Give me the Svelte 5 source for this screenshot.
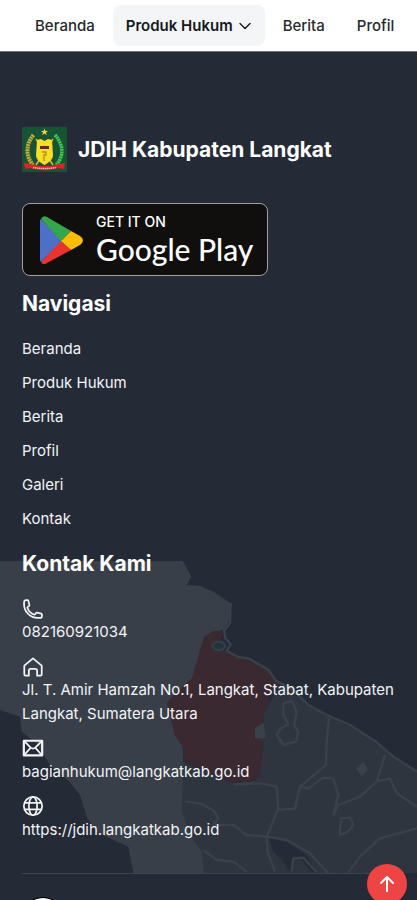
<script>
  const links = ['Beranda', 'Produk Hukum', 'Berita', 'Profil', 'Galeri', 'Kontak'];
</script>

<div class="page">
  <header>
    <nav class="top" aria-label="Menu utama">
      <a href="#beranda">Beranda</a>
      <button type="button" class="active">
        Produk Hukum
        <svg width="12" height="12" viewBox="0 0 12 12" fill="none" stroke="currentColor" stroke-width="1.4" stroke-linecap="round" stroke-linejoin="round" aria-hidden="true"><path d="M1 3.5 6 8.5 11 3.5" /></svg>
      </button>
      <a href="#berita">Berita</a>
      <a href="#profil">Profil</a>
    </nav>
  </header>

  <footer>
    <div class="main">
      <svg class="map" viewBox="0 78 1251 937" aria-hidden="true">
        <path fill="#393f49" d="M0 78H548L574 124 560 150 600 152 640 170 692 205 690 250 675 282 640 292 620 330 600 370 578 430 560 470 505 525 525 590 548 630 550 680 600 720 560 780 560 840 610 915 620 1015H400L385 935 330 910 290 890 262 850 240 780 210 742 150 690 110 625 65 590 60 545 0 525Z" />
        <path fill="#2e353f" d="M550 680 700 745 770 735 790 640 760 590 800 520 845 440 880 465 930 510 985 545 1050 575 1120 618 1180 670 1251 710V1015H612L605 950 570 900 545 830Z" />
        <path fill="#3a2931" d="M612 305 640 288 670 290 664 312 636 325 642 346 680 348 715 368 745 372 780 395 804 408 820 435 845 442 802 480 808 510 790 535 790 570 766 578 765 606 790 620 785 680 780 725 745 742 715 738 700 746 670 728 600 700 550 678 552 640 524 600 512 550 500 505 540 460 575 430 590 380Z" />
        <path fill="#242b36" d="M805 905 860 920 920 960 950 1012H935L900 970 875 975 870 1010 845 975 820 950Z" />
        <g fill="none" stroke="#39414b" stroke-width="7" stroke-linejoin="round">
          <path d="M692 205 690 265 672 287 676 310 692 328 680 348 715 366 745 370 780 390 806 405 828 438 880 464 925 510 985 542 1050 570 1130 622 1180 665 1251 710" />
          <path d="M850 505 875 498 890 530 882 570 895 590 888 620 850 630 830 600 842 580 865 568 850 540Z" />
          <path d="M987 548 980 620 978 690 930 730 900 755 885 820 835 825 830 755 785 745 700 748" />
          <path d="M835 820 815 870 800 905 802 950 825 1010" />
          <path d="M555 800 600 805 640 825 655 850 640 870 700 870 740 900 800 905 860 915 930 955 985 1015" />
          <path d="M1155 660 1130 740 1080 785 1015 810 1000 840 1015 780 1000 730 970 728 925 760 900 755" />
          <path d="M1130 740 1170 730 1190 775 1251 815M1251 880 1140 910 1080 965 1045 1012" />
          <path d="M1020 880 1025 850 1050 848 1060 870 1045 890 1020 900Z" />
          <path d="M610 945 650 975 700 980 740 1010M875 1010 880 970 910 968 950 1012" />
        </g>
        <path fill="#39414b" d="M765 578 790 565 798 610 765 610ZM1068 700 1090 680 1104 705 1085 724Z" />
        <ellipse cx="656" cy="333" rx="19" ry="13" fill="#28323d" stroke="#333e49" stroke-width="7" />
      </svg>

      <div class="brand">
        <svg width="45" height="45" viewBox="0 0 45 45" aria-hidden="true">
          <path fill="#175334" d="M0 0H45V45H0Z" />
          <path fill="#eed43b" d="m22.500 1.500 1 2.500h2.700l-2.200 1.600.9 2.600-2.400-1.600-2.400 1.600.9-2.600-2.200-1.600h2.700z" />
          <path fill="none" stroke="#c4ae39" stroke-width="4" stroke-dasharray="2 .6" d="M11.500 8C3 18 4 30 11 38" />
          <path fill="none" stroke="#43c955" stroke-width="3.500" stroke-dasharray="2 .6" d="M33 8C42 18 42 30 34 38" />
          <path stroke="#d8bc2c" stroke-width="1.500" d="m14 12 17 26M31 12 14 38" />
          <path fill="#f8df26" d="m15 13 4-1 3.500 2 3.500-2 4 1 1 15c0 5-5 8-8.500 10-3.500-2-8.500-5-8.500-10z" />
          <path fill="#652b18" d="M18 19h9v3h-9z" />
          <path fill="none" stroke="#b58b20" stroke-width="1.300" d="M20 25h4v3h-2v6" />
          <path fill="#db2525" d="m2 36 7 1c9 3 18 3 27 0l7-1-1 6-6-1c-9 3-18 3-27 0l-6 1z" />
          <path stroke="#f4b5b0" stroke-width="1.400" stroke-dasharray="1.500 .5" d="M11 40.500q11.500 2 23 0" fill="none" />
        </svg>
        <h1>JDIH Kabupaten Langkat</h1>
      </div>

      <a class="store" href="#google-play">
        <svg width="44" height="48" viewBox="0 0 44 48" aria-hidden="true">
          <path fill="#4c70c5" d="M1 3 22 25 1 46Q0 45 0 43V5Q0 4 1 3Z" />
          <path fill="#35a64b" d="M1 3Q3-1 7 1L31 15 21 25Z" />
          <path fill="#ea332f" d="M1 46Q3 50 7 47L31 34 21 25Z" />
          <path fill="#fbbc04" d="M31 15 40 20Q46 24 40 29L31 34 21 25Z" />
        </svg>
        <span class="words"><span class="get">GET IT ON</span><span class="gp">Google Play</span></span>
      </a>

      <h2>Navigasi</h2>
      <ul class="links">
        {#each links as label}
          <li><a href="#{label.toLowerCase().replace(' ', '-')}">{label}</a></li>
        {/each}
      </ul>

      <h2>Kontak Kami</h2>
      <address>
        <div class="item">
          <svg viewBox="0 0 24 24" aria-hidden="true"><path d="M2.250 6.750c0 8.284 6.716 15 15 15h2.250a2.250 2.250 0 0 0 2.250-2.250v-1.372c0-.516-.351-.966-.852-1.091l-4.423-1.106c-.44-.11-.902.055-1.173.417l-.97 1.293c-.282.376-.769.542-1.210.38a12.035 12.035 0 0 1-7.143-7.143c-.162-.441.004-.928.38-1.210l1.293-.97c.363-.271.527-.734.417-1.173L6.963 3.102a1.125 1.125 0 0 0-1.091-.852H4.500A2.250 2.250 0 0 0 2.250 4.500v2.250Z" /></svg>
          <a href="tel:082160921034">082160921034</a>
        </div>
        <div class="item">
          <svg viewBox="0 0 24 24" aria-hidden="true"><path d="M2.500 10.500 12 2.500 21.500 10.500V20q0 1.500-1.500 1.500h-3.500V16q0-2-2-2h-5q-2 0-2 2v5.500H4Q2.500 21.500 2.500 20Z" /></svg>
          <span>Jl. T. Amir Hamzah No.1, Langkat, Stabat, Kabupaten Langkat, Sumatera Utara</span>
        </div>
        <div class="item">
          <svg viewBox="0 0 24 24" aria-hidden="true"><path stroke-width="2.400" d="M2 3H22V19H2Z" /><path d="M3 4 9.500 10.500Q12 12.500 14.500 10.500L21 4M3 18 9 11M21 18 15 11" /></svg>
          <a href="mailto:bagianhukum@langkatkab.go.id">bagianhukum@langkatkab.go.id</a>
        </div>
        <div class="item">
          <svg viewBox="0 0 24 24" aria-hidden="true"><circle cx="12" cy="11" r="10" /><ellipse cx="12" cy="11" rx="4.500" ry="10" /><path d="M3 7.500H21M3 14.500H21" /></svg>
          <a href="https://jdih.langkatkab.go.id">https://jdih.langkatkab.go.id</a>
        </div>
      </address>
    </div>
    <div class="bottom"><span class="seal"></span></div>
  </footer>

  <button type="button" class="up" aria-label="Kembali ke atas">
    <svg width="18" height="18" viewBox="0 0 18 18" fill="none" stroke="currentColor" stroke-width="2" stroke-linecap="round" stroke-linejoin="round" aria-hidden="true"><path d="M9 16V2M3 8 9 2 15 8" /></svg>
  </button>
</div>

<style>
  :global(body) { margin: 0; background: #242b36; }
  .page {
    position: relative;
    height: 100vh;
    overflow: hidden;
    background: #242b36;
    color: #f3f4f6;
    font: 400 15px/24px Inter, "Noto Sans", sans-serif;
  }
  a { color: inherit; text-decoration: none; }
  header { background: #fff; color: #25282d; border-bottom: 1px solid #6b727b; }
  .top {
    display: flex;
    align-items: center;
    gap: 18px;
    height: 51px;
    padding-left: 35px;
    white-space: nowrap;
    font-weight: 500;
  }
  .top a:last-child { margin-left: 14px; }
  .active {
    display: flex;
    align-items: center;
    gap: 6px;
    height: 41px;
    padding: 0 14px 0 13px;
    border: 0;
    border-radius: 8px;
    background: #f3f5f7;
    color: #15181d;
    font: inherit;
    font-weight: 600;
  }
  .main { position: relative; padding: 75px 22px 31px; }
  .main > * { position: relative; }
  .main > .map { position: absolute; left: 0; bottom: 0; width: 100%; height: auto; }
  .brand { display: flex; align-items: center; gap: 11px; }
  h1, h2 { margin: 0; color: #fff; font-size: 21px; line-height: 32px; font-weight: 700; }
  .store {
    box-sizing: border-box;
    display: flex;
    align-items: center;
    gap: 12px;
    width: 246px;
    height: 73px;
    margin: 31px 0 12px;
    padding-left: 17px;
    border: 1px solid #a0a0a0;
    border-radius: 8px;
    background: #100f0e;
    color: #fff;
    white-space: nowrap;
  }
  .words { display: flex; flex-direction: column; }
  .get { font-size: 14px; line-height: 18px; font-weight: 500; }
  .gp { font: 500 30px/36px Lato, sans-serif; }
  .links { display: flex; flex-direction: column; gap: 10px; margin: 17px 0; padding: 0; list-style: none; }
  address { display: flex; flex-direction: column; gap: 12px; margin-top: 18px; font-style: normal; }
  .item { display: flex; flex-direction: column; align-items: flex-start; }
  .item svg { width: 22px; height: 22px; fill: none; stroke: #f3f4f6; stroke-width: 1.900; stroke-linecap: round; stroke-linejoin: round; }
  .bottom { margin: 0 22px; padding: 24px 0 0 1px; border-top: 1px solid #3d444e; }
  .seal { display: block; width: 40px; height: 40px; border-radius: 50%; background: #fff; box-shadow: 0 0 0 1px #000; }
  .up {
    position: absolute;
    right: 10px;
    bottom: -4px;
    display: grid;
    place-items: center;
    width: 40px;
    height: 40px;
    padding: 0;
    border: 0;
    border-radius: 50%;
    background: #ef4444;
    color: #fff;
  }
</style>
